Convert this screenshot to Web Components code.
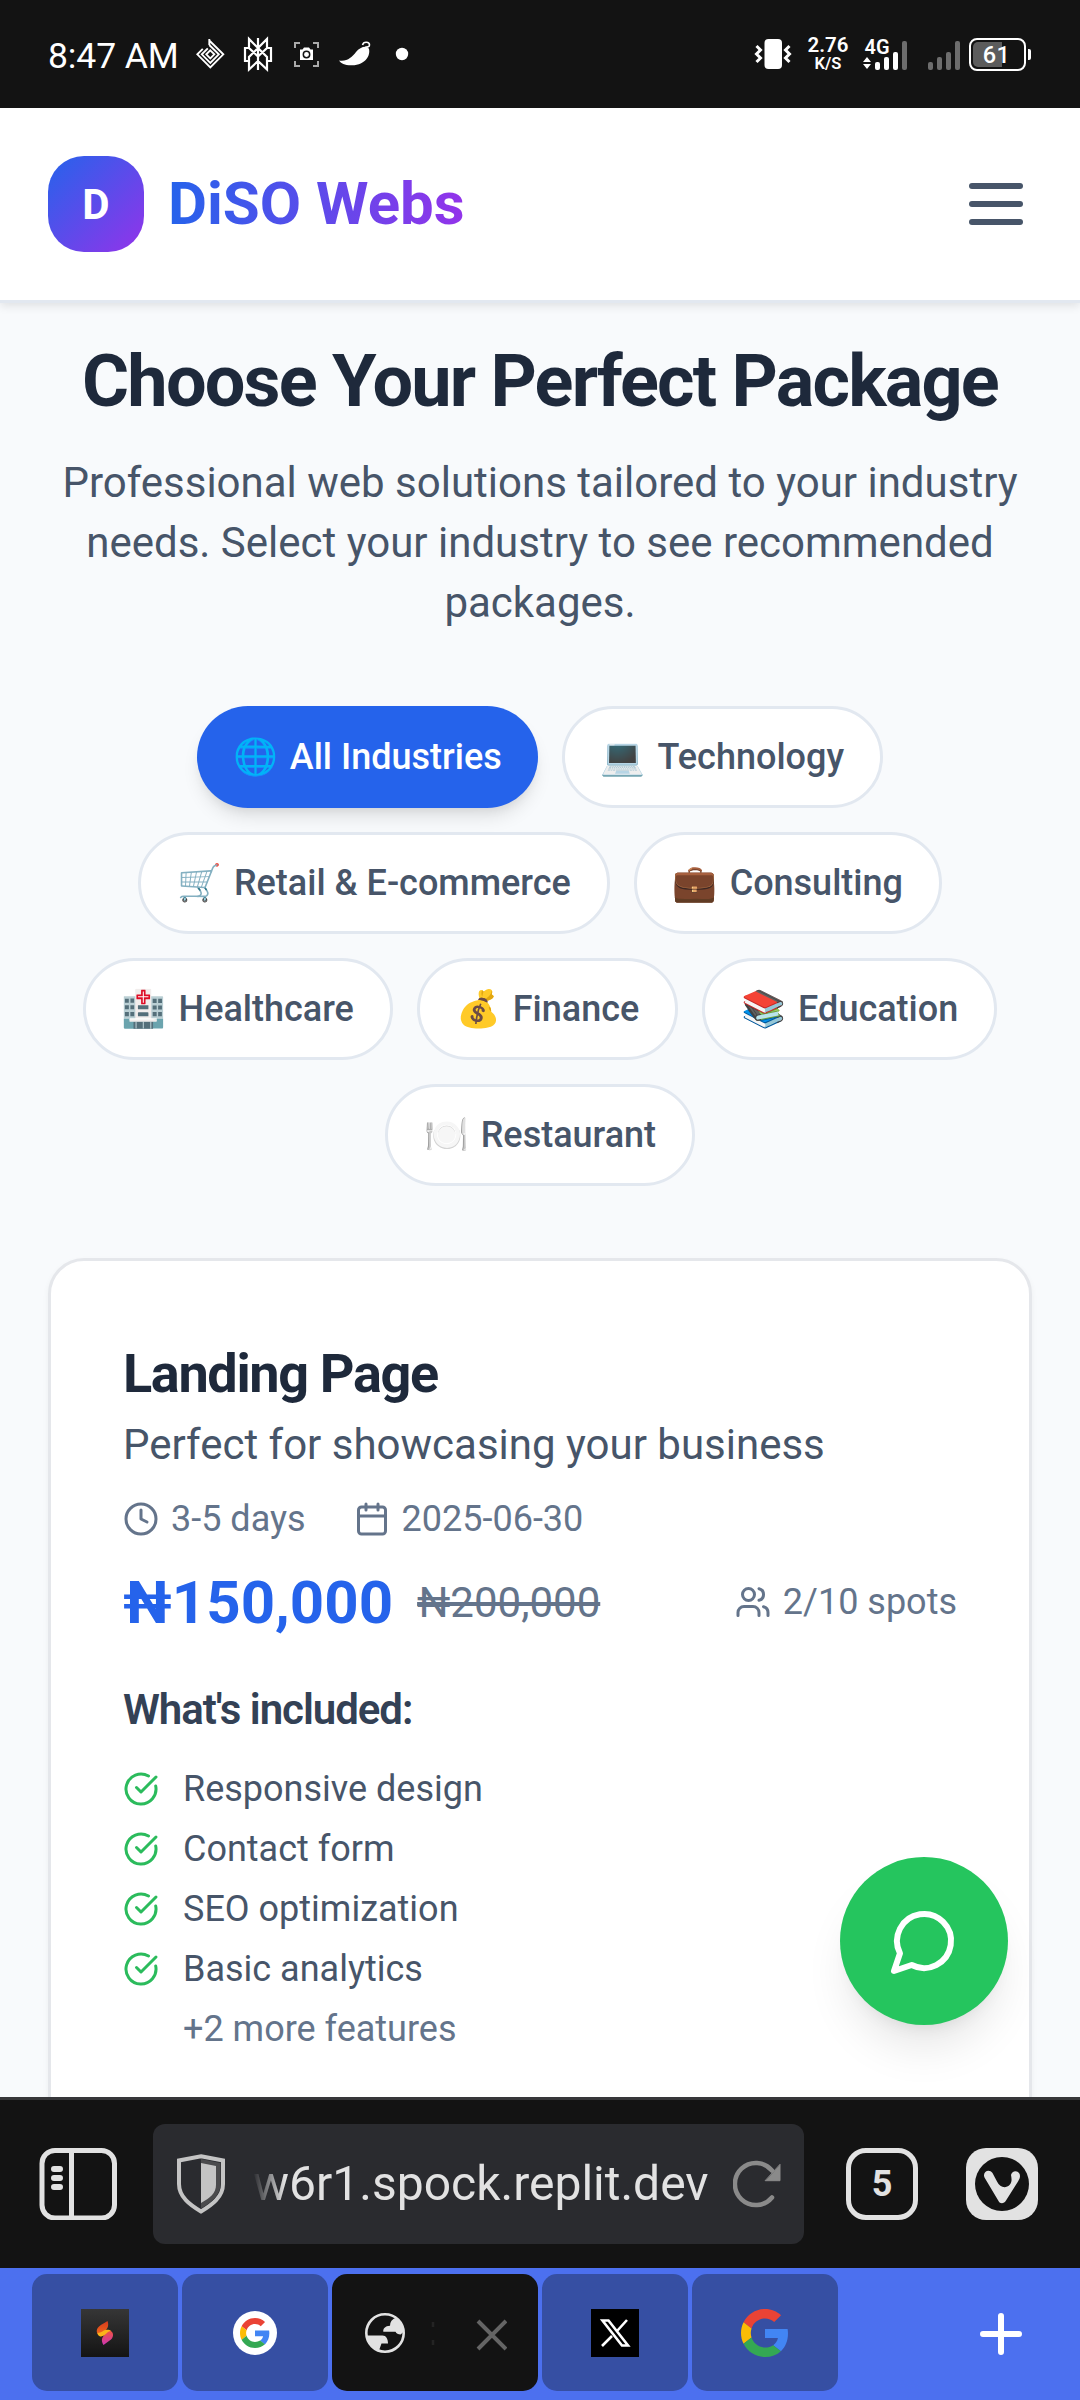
<!DOCTYPE html>
<html lang="en">
<head>
<meta charset="utf-8">
<title>DiSO Webs</title>
<style>
html,body{margin:0;padding:0}
body{width:1080px;height:2400px;overflow:hidden;background:#f8fafc;font-family:Roboto,"Noto Sans","Noto Color Emoji",sans-serif;display:flex;flex-direction:column}
</style>
</head>
<body>
<status-bar></status-bar>
<web-page></web-page>
<address-bar></address-bar>
<tab-strip></tab-strip>
<script>
const define=(name,css,html)=>{
  const t=document.createElement('template');
  t.innerHTML=`<style>:host,*{box-sizing:border-box}svg{display:block;flex:none}${css}</style>${typeof html==='string'?html:''}`;
  customElements.define(name,class extends HTMLElement{
    connectedCallback(){
      if(this.shadowRoot)return;
      const r=this.attachShadow({mode:'open'});
      r.append(t.content.cloneNode(true));
      if(typeof html==='function')r.innerHTML+=html(this);
    }
  });
};

const icons={
  clock:'<circle cx="12" cy="12" r="10"/><path d="M12 6v6l4 2"/>',
  calendar:'<path d="M8 2v4M16 2v4"/><rect x="3" y="4" width="18" height="18" rx="2"/><path d="M3 10h18"/>',
  users:'<path d="M16 21v-2a4 4 0 0 0-4-4H6a4 4 0 0 0-4 4v2"/><circle cx="9" cy="7" r="4"/><path d="M22 21v-2a4 4 0 0 0-3-3.87M16 3.13a4 4 0 0 1 0 7.75"/>',
  check:'<path d="M21.801 10A10 10 0 1 1 17 3.335"/><path d="m9 11 3 3L22 4"/>',
  message:'<path d="M7.9 20A9 9 0 1 0 4 16.1L2 22Z"/>'
};
define('line-icon',':host{display:block;flex:none;width:36px;height:36px}svg{width:100%;height:100%}',
 el=>`<svg viewBox="0 0 24 24" fill="none" stroke="currentColor" stroke-width="2" stroke-linecap="round" stroke-linejoin="round">${icons[el.getAttribute('name')]}</svg>`);

define('status-bar',`
:host{display:flex;flex:none;height:108px;background:#131313;color:#fff;align-items:center;padding:0 49px 0 48px}
.time{font-size:35.5px;letter-spacing:-.1px;line-height:48px;margin-top:4px;width:148px;white-space:nowrap}
.speed{display:flex;flex-direction:column;align-items:center;font-weight:600;width:40px;margin-left:15px}
.speed b{font-size:20.5px;font-weight:600;line-height:20px}.speed i{font-style:normal;font-size:16.5px;line-height:18px}
.sp{flex:1}
.net{margin-left:14px}
.bat{margin-left:9px;display:flex;align-items:center}
.cell{width:57px;height:33px;border:2px solid #fff;border-radius:8px;padding:2px;display:flex}
.num{flex:1;border-radius:5px;background:linear-gradient(90deg,#5c5c5c 60%,transparent 60%);font-size:23.5px;font-weight:500;line-height:26px;text-align:center;letter-spacing:.5px;padding-right:2px}
.tip{width:3px;height:11px;background:#fff;margin-left:2px;border-radius:0 2px 2px 0}
text{font-family:Roboto,sans-serif}
`,`
<div class="time">8:47 AM</div>
<svg width="214" height="54" viewBox="196 27 214 54" fill="none" stroke="#fff">
 <g stroke-width="1.900"><path d="M209.300 39v6M209.300 40.500l14 13.800-13 13-13-13 5.500-5.500"/><path d="M209.300 45l9.500 9.300-8.500 8.500-8.500-8.500 6-6"/><path d="M210.300 50.300l4 4-4 4-4-4z"/></g>
 <g stroke-width="2.200"><path d="M258 38v32M249 39v9l9 8.500 9-8.500v-9l-9 9zM249 48h-4v13h4v8.500l9-8.500 9 8.500V61h4V48h-4M249 61v-4l9-9 9 9v4"/></g>
 <g stroke="#aaa" stroke-width="2"><path d="M295 48v-5h5M313 43h5v5M318 61v5h-5M300 66h-5v-5"/></g>
 <path d="M300 49.500h2.500l1.500-2h5l1.500 2h2.500v10.500h-13z" fill="#fff" stroke="none"/><circle cx="306.500" cy="54.500" r="3.200" stroke="#131313" stroke-width="1.500"/>
 <path d="M339 60.500C347 62 352 57 356 52C360 47 367 45 369 49C370.500 55 366 65 352 65.300C345 65.500 341 63.500 339 60.500z" fill="#fff" stroke="none"/><path d="M362.500 45c1-4 7-3.500 7 0 0 2-3 2.500-4 1.500" stroke-width="1.600"/>
 <circle cx="402" cy="54" r="6.200" fill="#fff" stroke="none"/>
</svg>
<span class="sp"></span>
<svg width="40" height="36" viewBox="753 36 40 36" fill="none" stroke="#fff" stroke-width="3"><rect x="764.500" y="39" width="17.500" height="30" rx="4" fill="#fff" stroke="none"/><path d="M756.500 46l4 4-4 4 4 4-4 4M789.500 46l-4 4 4 4-4 4 4 4"/></svg>
<div class="speed"><b>2.76</b><i>K/S</i></div>
<svg class="net" width="98" height="60" viewBox="862 24 98 60" fill="#fff"><text x="864.500" y="53.500" font-size="21" font-weight="600" textLength="25" lengthAdjust="spacingAndGlyphs">4G</text>
 <path d="M867 57l4 5h-8zM867 69l4-5h-8z"/>
 <rect x="875" y="62" width="5" height="8" rx="2"/><rect x="884" y="57" width="5" height="13" rx="2"/><rect x="893" y="52" width="5" height="18" rx="2"/>
 <g fill="#6d6d6d"><rect x="902" y="41" width="5" height="29" rx="2"/><rect x="928" y="62" width="5" height="8" rx="2"/><rect x="937" y="57" width="5" height="13" rx="2"/><rect x="946" y="52" width="5" height="18" rx="2"/><rect x="955" y="41" width="5" height="29" rx="2"/></g></svg>
<div class="bat"><div class="cell"><div class="num">61</div></div><div class="tip"></div></div>`);

define('site-header',`
:host{display:flex;flex:none;height:195px;background:#fff;border-bottom:3px solid #e2e8f0;box-shadow:0 3px 9px rgba(0,0,0,.1);align-items:center;justify-content:space-between;padding:0 57px 0 48px;position:relative}
.brand{display:flex;align-items:center;gap:24px}
.logo{width:96px;height:96px;border-radius:36px;background:linear-gradient(135deg,#2563eb,#9333ea);color:#fff;font-weight:700;font-size:42px;display:flex;align-items:center;justify-content:center}
.name{font-size:60px;line-height:84px;font-weight:700;background:linear-gradient(90deg,#2563eb,#9333ea);-webkit-background-clip:text;background-clip:text;color:transparent;white-space:nowrap}
.menu{display:flex;flex-direction:column;gap:12px}.menu i{width:54px;height:6px;border-radius:3px;background:#475569}
`,`<div class="brand"><div class="logo">D</div><div class="name">DiSO Webs</div></div><div class="menu"><i></i><i></i><i></i></div>`);

define('industry-pill',`
:host{display:flex;align-items:center;height:102px;padding:0 36px;border:3px solid #e2e8f0;border-radius:51px;background:#fff;color:#475569;font-size:36px;font-weight:500;line-height:48px;white-space:nowrap}
:host([active]){background:#2563eb;border:0;color:#fff;box-shadow:0 12px 18px -3px rgba(0,0,0,.1),0 6px 12px -6px rgba(0,0,0,.1)}
.e{margin-right:12px}
`,`<span class="e"><slot name="icon"></slot></span><slot></slot>`);

define('feature-item',`
:host{display:flex;align-items:center;gap:24px;height:48px;font-size:36px;line-height:48px;color:#475569}
:host([more]){color:#64748b;padding-left:60px}
:host([more]) line-icon{display:none}
line-icon{color:#2bbb5c}
`,`<line-icon name="check"></line-icon><slot></slot>`);

define('package-card',`
:host{display:block;height:1000px;background:#fff;border:3px solid #e5e7eb;border-radius:36px;padding:72px;box-shadow:0 3px 6px rgba(0,0,0,.05)}
h3{margin:7px 0 0;font-size:54px;line-height:67px;font-weight:700;letter-spacing:-.025em;color:#1e293b}
.sub{font-size:42px;line-height:60px;color:#475569;margin-top:8px}
.row{display:flex;align-items:center}
.meta{gap:48px;height:48px;margin-top:20px;font-size:36px;color:#64748b}
.meta span,.spots{display:flex;align-items:center;gap:12px}
.price{height:84px;margin-top:17px;justify-content:space-between}
.now{font-size:60px;font-weight:700;color:#2563eb}
.old{font-size:42px;color:#64748b;margin-left:24px;text-decoration:line-through}
.spots{font-size:36px;color:#64748b}
h4{margin:36px 0 0;font-size:42px;line-height:60px;font-weight:600;letter-spacing:-.025em;color:#334155}
.list{display:flex;flex-direction:column;gap:12px;margin-top:25px}
`,`<h3>Landing Page</h3><div class="sub">Perfect for showcasing your business</div>
<div class="row meta"><span><line-icon name="clock"></line-icon>3-5 days</span><span><line-icon name="calendar"></line-icon>2025-06-30</span></div>
<div class="row price"><div class="row"><span class="now">₦150,000</span><span class="old">₦200,000</span></div><div class="spots"><line-icon name="users"></line-icon>2/10 spots</div></div>
<h4>What's included:</h4>
<div class="list"><feature-item>Responsive design</feature-item><feature-item>Contact form</feature-item><feature-item>SEO optimization</feature-item><feature-item>Basic analytics</feature-item><feature-item more>+2 more features</feature-item></div>`);

define('chat-button',`
:host{position:absolute;right:72px;bottom:72px;width:168px;height:168px;border-radius:50%;background:#25c55e;color:#fff;display:flex;align-items:center;justify-content:center;box-shadow:0 30px 45px -9px rgba(0,0,0,.1),0 12px 18px -12px rgba(0,0,0,.1)}
line-icon{width:72px;height:72px}
`,`<line-icon name="message"></line-icon>`);

define('web-page',`
:host{display:flex;flex-direction:column;flex:none;height:1989px;overflow:hidden;position:relative;background:#f8fafc}
main{padding:0 48px}
h1{margin:34px 0 0;font-size:72px;line-height:90px;font-weight:700;letter-spacing:-.025em;color:#1e293b;text-align:center;white-space:nowrap}
p{margin:26px 0 0;font-size:42px;line-height:60px;color:#475569;text-align:center}
.pills{display:flex;flex-wrap:wrap;justify-content:center;gap:24px;margin:73px 0 72px}
`,`<site-header></site-header><main><h1>Choose Your Perfect Package</h1>
<p>Professional web solutions tailored to your industry needs. Select your industry to see recommended packages.</p>
<div class="pills">
<industry-pill active><span slot="icon">🌐</span>All Industries</industry-pill>
<industry-pill><span slot="icon">💻</span>Technology</industry-pill>
<industry-pill><span slot="icon">🛒</span>Retail &amp; E-commerce</industry-pill>
<industry-pill><span slot="icon">💼</span>Consulting</industry-pill>
<industry-pill><span slot="icon">🏥</span>Healthcare</industry-pill>
<industry-pill><span slot="icon">💰</span>Finance</industry-pill>
<industry-pill><span slot="icon">📚</span>Education</industry-pill>
<industry-pill><span slot="icon">🍽️</span>Restaurant</industry-pill>
</div>
<package-card></package-card></main><chat-button></chat-button>`);

define('address-bar',`
:host{display:flex;flex:none;height:171px;border-top:3px solid #37373a;background:#131313;align-items:center;padding:0 42px 0 39px;color:#e2e2e2}
.field{display:flex;align-items:center;width:651px;height:120px;margin-left:36px;border-radius:12px;background:#2a2b2f;padding:0 24px}
.url{font-size:48px;line-height:60px;width:455px;margin-left:28px;white-space:nowrap;-webkit-mask:linear-gradient(90deg,transparent,#000 32px);mask:linear-gradient(90deg,transparent,#000 32px)}
.reload{margin-left:25px}
.tabs{width:72px;height:72px;margin-left:42px;border:5px solid #e2e2e2;border-radius:20px;display:flex;align-items:center;justify-content:center;font-size:36px;font-weight:700}
.viv{margin-left:48px}
`,`<svg width="78" height="72" viewBox="0 0 78 72" fill="none" stroke="#e2e2e2" stroke-width="5"><rect x="3" y="2.500" width="72.500" height="67.500" rx="13"/><path d="M32.500 2v68"/><path stroke-width="6" stroke-linecap="round" d="M15 21h6M15 30h6M15 39h6"/></svg>
<div class="field"><svg width="48" height="60" viewBox="0 0 48 60"><path d="M24 2.300L46 6.500V30c0 13-11 21-22 27.500C13 51 2 43 2 30V6.500z" fill="#2a2b2f" stroke="#c4c4c4" stroke-width="4"/><path d="M24 5l19.500 4v21c0 11-8.500 18-19.500 24.500z" fill="#4b4b4d"/><path d="M24 9l15 3v19c0 8-6 13-15 18z" fill="#c4c4c4"/></svg>
<div class="url">w6r1.spock.replit.dev</div>
<svg class="reload" width="50" height="50" viewBox="0 0 50 50" fill="none" stroke="#8a8a8a" stroke-width="4.500" stroke-linecap="round"><path d="M39 38.500A21 21 0 1 1 39 11.500"/><path d="M47 5.700v16H32.500z" fill="#8a8a8a" stroke="#8a8a8a" stroke-width="1"/></svg></div>
<div class="tabs">5</div>
<svg class="viv" width="72" height="72" viewBox="0 0 72 72"><rect width="72" height="72" rx="20" fill="#e2e2e2"/><circle cx="36" cy="36" r="27" fill="#131313"/><path d="M18.500 29.500C16 24 23 20 26.500 25L31 33.500C34 40 40 40.500 43.500 37C46.500 34 45.500 30 45 27C46 21.500 54 22 54 28C54 30 53.500 31 52 33.500L40 52.500C38 56 34 56 32.500 53Z" fill="#e2e2e2"/></svg>`);

const G=`<path fill="#EA4335" d="M24 9.500c3.540 0 6.710 1.220 9.210 3.600l6.850-6.850C35.900 2.380 30.470 0 24 0 14.620 0 6.510 5.380 2.560 13.220l7.980 6.190C12.430 13.720 17.740 9.500 24 9.500z"/><path fill="#4285F4" d="M46.980 24.550c0-1.570-.15-3.090-.38-4.550H24v9.020h12.940c-.58 2.960-2.260 5.480-4.780 7.180l7.730 6c4.510-4.180 7.090-10.360 7.090-17.650z"/><path fill="#FBBC05" d="M10.530 28.590c-.48-1.450-.76-2.990-.76-4.590s.27-3.140.76-4.590l-7.980-6.190C.92 16.460 0 20.120 0 24c0 3.880.92 7.540 2.560 10.780l7.970-6.190z"/><path fill="#34A853" d="M24 48c6.480 0 11.930-2.130 15.890-5.810l-7.730-6c-2.150 1.450-4.920 2.300-8.160 2.300-6.260 0-11.570-4.220-13.470-9.910l-7.980 6.190C6.510 42.620 14.620 48 24 48z"/>`;
define('browser-tab',`
:host{display:flex;align-items:center;justify-content:center;width:146px;height:117px;border-radius:15px;background:#364fa3}
:host([active]){width:206px;background:#131313;justify-content:flex-start;padding-left:33px}
`,`<slot></slot>`);
define('tab-strip',`
:host{display:flex;flex:none;height:132px;background:#4c70ef;padding:6px 58px 0 32px;gap:4px}
.plus{margin:39px 0 0 auto}
`,`
<browser-tab><svg width="48" height="48" viewBox="0 0 48 48"><defs><linearGradient id="k" x2="0" y2="1"><stop stop-color="#363636"/><stop offset="1" stop-color="#141414"/></linearGradient><linearGradient id="r" x2="0" y2="1"><stop stop-color="#d63a1e"/><stop offset="1" stop-color="#f4701c"/></linearGradient><linearGradient id="m" x2="0" y2="1"><stop stop-color="#f0553a"/><stop offset="1" stop-color="#cf35b5"/></linearGradient></defs><path fill="url(#k)" d="M0 0h48v48H0z"/><path fill="url(#r)" d="M26.500 12c1.500 4 .5 7-2 9.500l-4.500 6c-5-2-5.500-7-2-10 3-2.500 6-4 8.500-5.500z"/><path fill="url(#m)" d="M22.500 36c-2-3-2.500-7 1-10l4-5c5 1 6 6 2.500 9.500-2.500 2-5 3.500-7.500 5.500z"/><path fill="#fbb41a" d="M16.500 24c4 0 6-3 9-3.200 2-.2 3.500.2 4.500 1.200-4 0-5 5-10 5.500-2 0-3.300-1.500-3.500-3.500z"/></svg></browser-tab>
<browser-tab><svg width="44" height="44" viewBox="0 0 44 44"><circle cx="22" cy="22" r="22" fill="#fff"/><g transform="translate(7 7) scale(.625)">${G}</g></svg></browser-tab>
<browser-tab active><svg width="142" height="42" viewBox="0 0 142 42"><circle cx="20" cy="21" r="18.700" fill="none" stroke="#e2e2e2" stroke-width="2.600"/><path fill="#e2e2e2" d="M18.300 19.700C18 16.500 20 14 25 13.700C25 10 27 7 31 5.500C36 9 39 14 39.300 19L35.700 22.500C33 22.500 31.500 21.500 30.500 19.700zM2 23.500H17.500C21 23.500 23 27 23 31.500H16.500L14 38.500C7 36 2.500 30 2 23.500z"/><path stroke="#242424" stroke-width="2.500" d="M68 10v5M68 28v5"/><path stroke="#656565" stroke-width="4" d="M113 9l28 28M141 9l-28 28"/></svg></browser-tab>
<browser-tab><svg width="48" height="48" viewBox="0 0 48 48"><path d="M0 0h48v48H0z"/><path d="M11.500 11.500h6L37 36.500h-6zM36 11L26.500 21.500M21 27L11 37" fill="none" stroke="#fff" stroke-width="2.600"/></svg></browser-tab>
<browser-tab><svg width="48" height="48" viewBox="0 0 48 48">${G}</svg></browser-tab>
<svg class="plus" width="42" height="42" viewBox="0 0 42 42" stroke="#fff" stroke-width="6" stroke-linecap="round"><path d="M21 3v36M3 21h36"/></svg>`);
</script>
</body>
</html>
